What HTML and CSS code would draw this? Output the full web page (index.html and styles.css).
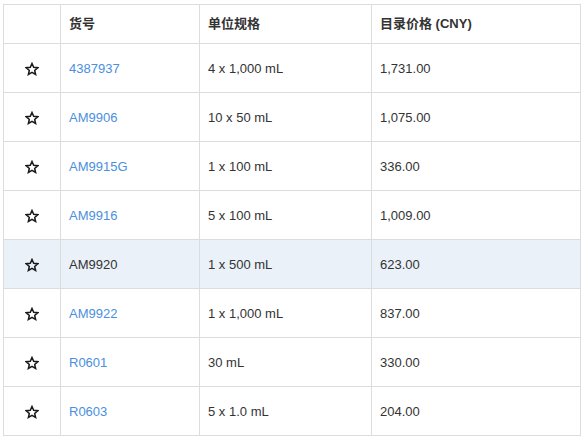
FILE: index.html
```html
<!DOCTYPE html>
<html lang="zh">
<head>
<meta charset="utf-8">
<link rel="stylesheet" href="styles.css">
</head>
<body>
<table class="products">
  <colgroup>
    <col class="c-star"><col class="c-sku"><col class="c-size"><col class="c-price">
  </colgroup>
  <thead>
    <tr><th></th><th>货号</th><th>单位规格</th><th>目录价格 (CNY)</th></tr>
  </thead>
  <tbody>
    <tr><td class="star"><svg class="star-icon" viewBox="0 0 24 24"><path d="M12 2.5l2.9 6.6 7.1.6-5.4 4.7 1.6 7-6.2-3.7-6.2 3.7 1.6-7L2 9.7l7.1-.6z"/></svg></td><td><a href="#">4387937</a></td><td>4 x 1,000 mL</td><td>1,731.00</td></tr>
    <tr><td class="star"><svg class="star-icon" viewBox="0 0 24 24"><path d="M12 2.5l2.9 6.6 7.1.6-5.4 4.7 1.6 7-6.2-3.7-6.2 3.7 1.6-7L2 9.7l7.1-.6z"/></svg></td><td><a href="#">AM9906</a></td><td>10 x 50 mL</td><td>1,075.00</td></tr>
    <tr><td class="star"><svg class="star-icon" viewBox="0 0 24 24"><path d="M12 2.5l2.9 6.6 7.1.6-5.4 4.7 1.6 7-6.2-3.7-6.2 3.7 1.6-7L2 9.7l7.1-.6z"/></svg></td><td><a href="#">AM9915G</a></td><td>1 x 100 mL</td><td>336.00</td></tr>
    <tr><td class="star"><svg class="star-icon" viewBox="0 0 24 24"><path d="M12 2.5l2.9 6.6 7.1.6-5.4 4.7 1.6 7-6.2-3.7-6.2 3.7 1.6-7L2 9.7l7.1-.6z"/></svg></td><td><a href="#">AM9916</a></td><td>5 x 100 mL</td><td>1,009.00</td></tr>
    <tr class="active"><td class="star"><svg class="star-icon" viewBox="0 0 24 24"><path d="M12 2.5l2.9 6.6 7.1.6-5.4 4.7 1.6 7-6.2-3.7-6.2 3.7 1.6-7L2 9.7l7.1-.6z"/></svg></td><td>AM9920</td><td>1 x 500 mL</td><td>623.00</td></tr>
    <tr><td class="star"><svg class="star-icon" viewBox="0 0 24 24"><path d="M12 2.5l2.9 6.6 7.1.6-5.4 4.7 1.6 7-6.2-3.7-6.2 3.7 1.6-7L2 9.7l7.1-.6z"/></svg></td><td><a href="#">AM9922</a></td><td>1 x 1,000 mL</td><td>837.00</td></tr>
    <tr><td class="star"><svg class="star-icon" viewBox="0 0 24 24"><path d="M12 2.5l2.9 6.6 7.1.6-5.4 4.7 1.6 7-6.2-3.7-6.2 3.7 1.6-7L2 9.7l7.1-.6z"/></svg></td><td><a href="#">R0601</a></td><td>30 mL</td><td>330.00</td></tr>
    <tr><td class="star"><svg class="star-icon" viewBox="0 0 24 24"><path d="M12 2.5l2.9 6.6 7.1.6-5.4 4.7 1.6 7-6.2-3.7-6.2 3.7 1.6-7L2 9.7l7.1-.6z"/></svg></td><td><a href="#">R0603</a></td><td>5 x 1.0 mL</td><td>204.00</td></tr>
  </tbody>
</table>
</body>
</html>
```

FILE: styles.css
```css
html, body {
  margin: 0;
  padding: 0;
  background: #fff;
}
body {
  padding: 4px 3px 0 3px;
  font-family: "Liberation Sans", Arial, "Noto Sans CJK SC", sans-serif;
  font-size: 13px;
  color: #333;
}
.products {
  border-collapse: collapse;
  width: 577px;
  table-layout: fixed;
}
.c-star { width: 57px; }
.c-sku { width: 139px; }
.c-size { width: 172px; }
.c-price { width: 209px; }
.products th,
.products td {
  border: 1px solid #dcdcdc;
  text-align: left;
  vertical-align: middle;
  padding: 0 8px;
}
.products th {
  height: 35px;
  font-weight: bold;
  color: #333;
  padding-bottom: 3px;
}
.products td {
  height: 48px;
}
.products td.star {
  text-align: center;
  padding: 0;
}
.star-icon {
  display: block;
  width: 14px;
  height: 14px;
  margin: 1px auto 0;
  fill: none;
  stroke: #1a1a1a;
  stroke-width: 2.6;
  stroke-linejoin: miter;
}
.products a {
  color: #4a8fe0;
  text-decoration: none;
}
.products tr.active td {
  background: #eaf1f9;
}
```
